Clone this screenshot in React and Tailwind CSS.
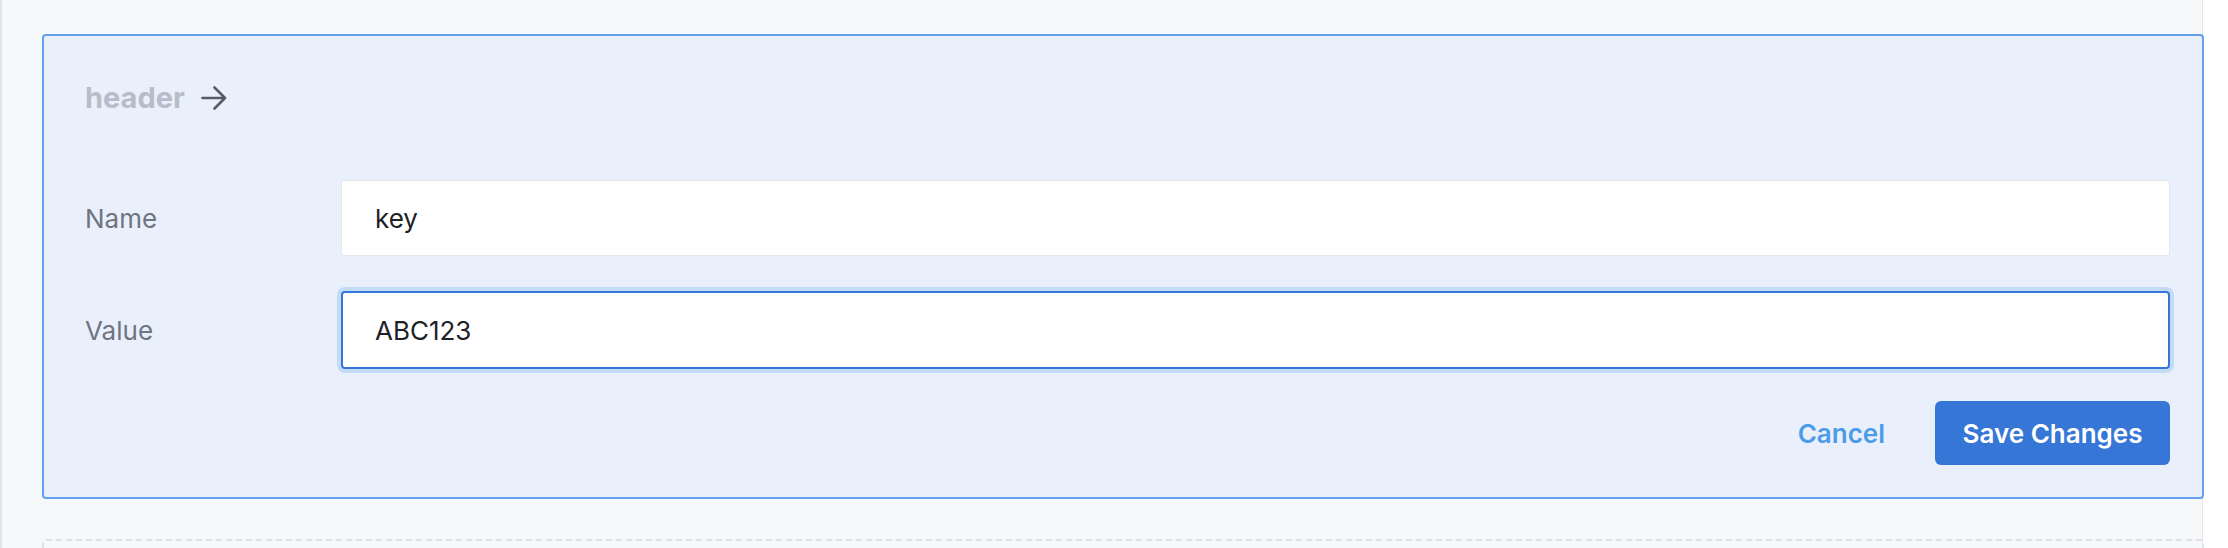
import React, { useState } from "react";

function ArrowIcon() {
  return (
    <svg width="26" height="24" viewBox="0 0 26 24" fill="none" className="text-[#555b69]">
      <path d="M1.5 12H24M13.5 1.5L24 12L13.5 22.5" stroke="currentColor" strokeWidth="2.6" strokeLinecap="round" strokeLinejoin="round" />
    </svg>
  );
}

function Field({ label, value, onChange, focused }) {
  return (
    <div className="flex items-center">
      <label className="w-[256px] shrink-0 text-[26px] text-[#6e7482]">{label}</label>
      <input
        value={value}
        onChange={(e) => onChange(e.target.value)}
        className={
          focused
            ? "flex-1 h-[78px] rounded-[4px] bg-white border-2 border-[#3577d8] shadow-[0_0_0_4px_#c3dbf7] pl-[32px] text-[26px] text-[#1e2126] outline-none"
            : "flex-1 h-[76px] rounded-[3px] bg-white border border-[#e3e7ee] pl-[33px] text-[26px] text-[#1e2126] outline-none"
        }
      />
    </div>
  );
}

export default function App() {
  const [name, setName] = useState("key");
  const [value, setValue] = useState("ABC123");

  return (
    <div className="w-[2228px] h-[548px] bg-white flex overflow-hidden font-['Inter',sans-serif]">
      <div className="w-[2px] bg-[#dfe5ee] shrink-0" />
      <div className="w-[2201px] shrink-0 bg-[#f7f8fa] border-r border-[#e4e6ea] pt-[34px] pl-[40px]">
        {/* Header editor card */}
        <div className="w-[2162px] rounded-[4px] border-2 border-[#64a1ec] bg-[#e9f0fb] pl-[41px] pr-[32px] pt-[37px] pb-[32px]">
          <div className="flex items-center gap-[16px] h-[50px]">
            <span className="text-[29px] font-bold text-[#b7bcc8]">header</span>
            <ArrowIcon />
          </div>
          <div className="mt-[57px] flex flex-col gap-[35px]">
            <Field label="Name" value={name} onChange={setName} />
            <Field label="Value" value={value} onChange={setValue} focused />
          </div>
          <div className="mt-[32px] flex items-center justify-end gap-[30px]">
            <button className="px-[20px] h-[64px] text-[26px] font-semibold text-[#4b9be9]">Cancel</button>
            <button className="w-[235px] h-[64px] rounded-[6px] bg-[#3676d7] text-[26px] font-semibold text-white">
              Save Changes
            </button>
          </div>
        </div>
        <div className="mt-[40px] w-[2162px] h-[60px] rounded-[4px] border-2 border-dashed border-[#dde1ea]" />
      </div>
    </div>
  );
}
